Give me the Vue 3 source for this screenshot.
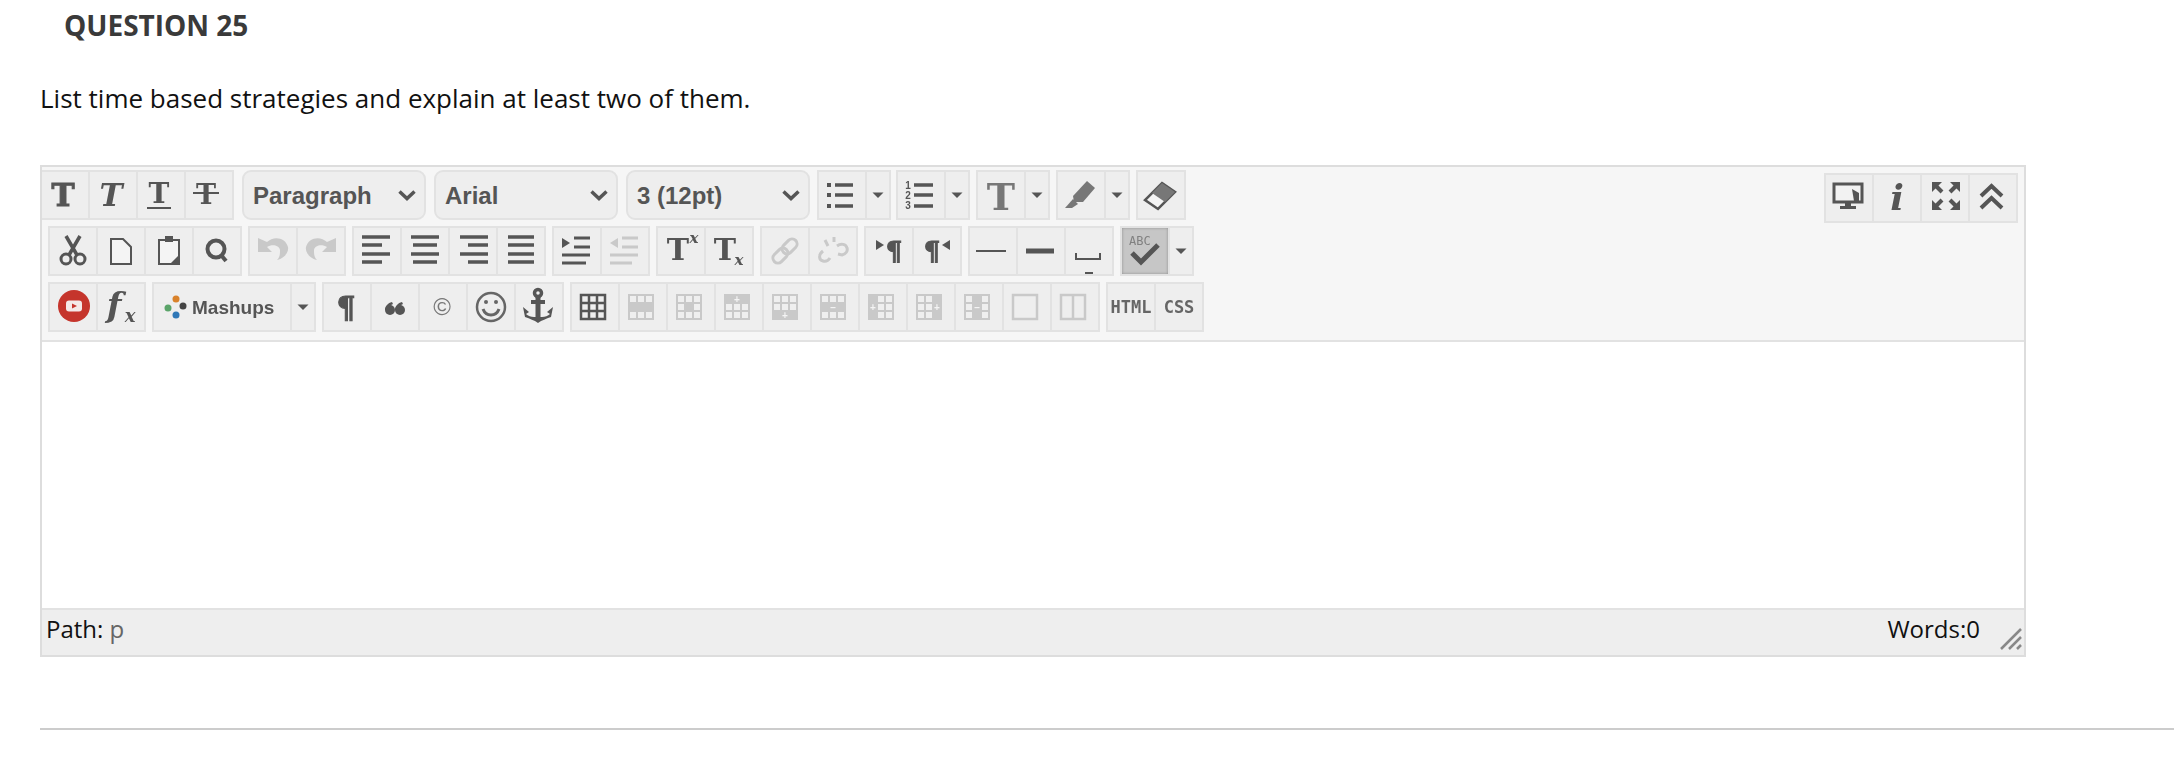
<script setup>
const D = '#555'
const G = '#c9c9c9'

const t = (x, y, size, str, fill = D, extra = '') =>
  `<text x="${x}" y="${y}" font-size="${size}" fill="${fill}" text-anchor="middle" font-family="DejaVu Serif" font-weight="bold" ${extra}>${str}</text>`

const heavy = `stroke="${D}" stroke-width="1"`

const lines = (rows, color = D, w = 3.5) =>
  rows.map(([a, b, y]) => `<path d="M${a} ${y}H${b}" stroke="${color}" stroke-width="${w}"/>`).join('')

const num = (y, n) =>
  `<text x="10" y="${y}" font-size="10" font-weight="bold" font-family="Liberation Sans" fill="${D}" text-anchor="middle">${n}</text>`

// table icons: 3x3 grid, solid cells are left out of the light squares
const grid = (solid, sign = '', sx = 0, sy = 0) => {
  let s = `<rect x="8" y="10" width="26" height="26" fill="${G}"/>`
  for (let r = 0; r < 3; r++) {
    for (let c = 0; c < 3; c++) {
      if (!solid.includes(r * 3 + c)) {
        s += `<rect x="${10 + c * 8}" y="${12 + r * 8}" width="6" height="6" fill="#efefef"/>`
      }
    }
  }
  if (sign) s += `<text x="${sx}" y="${sy}" font-size="10" font-family="Liberation Sans" font-weight="bold" fill="#f4f4f4" text-anchor="middle">${sign}</text>`
  return s
}

const undo = `<path d="M8 10v14h14l-5-5c5-3 12-2 13 3 0 4 0 7-3 10 8-2 12-8 11-13-2-9-14-12-21-5z" fill="${G}"/>`
const mark = `<circle cx="18" cy="26" r="5"/><path d="M13 26c0-4 3-7 7-8l1 2c-3 1-4 3-3 6z"/>`

const icons = {
  arrow: `<path d="M5.500 20.500h11l-5.500 5.500z" fill="${D}"/>`,
  bold: t(21, 34, 31, 'T', D, heavy),
  italic: t(21, 34, 31, 'T', D, 'font-style="italic"'),
  underline: t(21, 31, 28, 'T') + `<path d="M9 36H33" stroke="${D}" stroke-width="2"/>`,
  strike: t(20, 32, 27, 'T') + `<path d="M7 21H33" stroke="${D}" stroke-width="2"/>`,
  ul: `<g fill="${D}"><rect x="8" y="11" width="4" height="4"/><rect x="8" y="21" width="4" height="4"/><rect x="8" y="32" width="4" height="4"/></g>` +
    lines([[16, 34, 13], [16, 34, 23], [16, 34, 34]]),
  ol: num(17, 1) + num(27, 2) + num(37, 3) + lines([[16, 35, 13], [16, 35, 23], [16, 35, 34]]),
  color: t(23, 38, 38, 'T', '#777'),
  highlight: `<path d="M29 9l8 7-12 14-9 0-1-6z" fill="#777"/><path d="M15 27l5 5-6 4H7z" fill="#777"/>`,
  eraser: `<path d="M24 11l13 9-17 17-13-9z" fill="#f4f4f4" stroke="${D}" stroke-width="2.500"/><path d="M24 11l13 9-10 10-13-9z" fill="#777"/>`,
  slideshow: `<rect x="8" y="9" width="28" height="18" fill="#f2f2f2" stroke="${D}" stroke-width="3"/><path d="M26 14l7 4v8h-5z" fill="${D}"/><path d="M19 27h6v4h5v3H14v-3h5z" fill="${D}"/>`,
  info: t(23, 35, 36, 'i', D, 'font-style="italic"'),
  fullscreen: ['', 'matrix(-1 0 0 1 48 0)', 'matrix(1 0 0 -1 0 42)', 'matrix(-1 0 0 -1 48 42)']
    .map((m) => `<g transform="${m}"><path d="M10 7h10l-10 10z" fill="${D}"/><path d="M13 10l7 7" stroke="${D}" stroke-width="4"/></g>`).join(''),
  collapse: `<path d="M11 21L21.500 11 32 21M11 33L21.500 23 32 33" fill="none" stroke="${D}" stroke-width="4"/>`,
  cut: `<g fill="none" stroke="${D}"><circle cx="16" cy="31" r="5" stroke-width="3"/><circle cx="30" cy="31" r="5" stroke-width="3"/><path d="M19 27L30 8M27 27L16 8" stroke-width="3.500"/></g>`,
  copy: `<path d="M13 11h12l8 8v17H13z" fill="#f4f4f4" stroke="${D}" stroke-width="2"/>`,
  paste: `<rect x="13" y="12" width="20" height="24" fill="#f4f4f4" stroke="${D}" stroke-width="2"/><rect x="19" y="8" width="8" height="6" fill="${D}"/><path d="M33 27v9h-9z" fill="${D}"/>`,
  find: `<circle cx="22" cy="21" r="8.500" fill="none" stroke="${D}" stroke-width="4"/><path d="M27 27l5 6" stroke="${D}" stroke-width="4"/>`,
  undo,
  redo: `<g transform="matrix(-1 0 0 1 46 0)">${undo}</g>`,
  left: lines([[8, 36, 9], [8, 28, 17], [8, 36, 26], [8, 28, 34]]),
  center: lines([[9, 37, 9], [11, 35, 17], [9, 37, 26], [11, 35, 34]]),
  right: lines([[10, 38, 9], [18, 38, 17], [10, 38, 26], [18, 38, 34]]),
  justify: lines([[10, 36, 9], [10, 36, 17], [10, 36, 26], [10, 36, 34]]),
  indent: `<path d="M8 10l8 5-8 5z" fill="${D}"/>` + lines([[20, 36, 10], [20, 36, 19], [8, 36, 27], [8, 32, 35]], D, 3),
  outdent: `<path d="M16 10l-8 5 8 5z" fill="${G}"/>` + lines([[20, 36, 10], [20, 36, 19], [8, 36, 27], [8, 30, 35]], G, 3),
  sup: t(20, 32, 30, 'T') + t(36, 15, 15, 'x', D, 'font-style="italic"'),
  sub: t(19, 32, 30, 'T') + t(33, 37, 15, 'x', D, 'font-style="italic"'),
  link: `<g fill="none" stroke="${G}" stroke-width="3" transform="rotate(-45 23 23)"><rect x="8" y="18" width="17" height="10" rx="5"/><rect x="21" y="18" width="17" height="10" rx="5"/></g>`,
  unlink: `<path d="M13 23c-5 4-4 9 0 10 3 1 5 0 7-3M27 18c4-3 9-2 10 2 1 3-1 6-5 7l-4-1M15 12l3 6M24 9v5" fill="none" stroke="${G}" stroke-width="3"/>`,
  ltr: `<path d="M10 12l8 5-8 5z" fill="${D}"/>` + t(28, 32, 26, '¶', D, heavy),
  rtl: `<path d="M36 12l-8 5 8 5z" fill="${D}"/>` + t(18, 32, 26, '¶', D, heavy),
  hr: `<path d="M6 23H36" stroke="${D}" stroke-width="2"/>`,
  hrthick: `<path d="M8 23H36" stroke="${D}" stroke-width="5"/>`,
  nbsp: `<path d="M10 25v6H34v-6" fill="none" stroke="${D}" stroke-width="2"/><path d="M19 45h8" stroke="${D}" stroke-width="2"/>`,
  spell: `<text x="7" y="17" font-size="12" font-family="DejaVu Sans Mono" fill="#808080">ABC</text><path d="M10 25l9 9L36 17" fill="none" stroke="${D}" stroke-width="5"/>`,
  youtube: `<circle cx="24" cy="22" r="16" fill="#c5352c"/><rect x="16" y="16.500" width="16" height="11" rx="3" fill="#f4e9e8"/><path d="M22 19.500l5 2.500-5 2.500z" fill="#c5352c"/>`,
  fx: t(16, 33, 34, 'f', D, 'font-style="italic"') + t(32, 38, 18, 'x', D, 'font-style="italic"'),
  mashups: `<circle cx="22" cy="15" r="3.500" fill="#d9822b"/><circle cx="14" cy="24" r="3.500" fill="#5aa469"/><circle cx="29" cy="22" r="3.500" fill="#444"/><circle cx="22" cy="31" r="3.500" fill="#2f78b7"/>` +
    `<text x="38" y="30" font-size="19" font-weight="bold" font-family="Liberation Sans" fill="${D}">Mashups</text>`,
  para: t(22, 34, 30, '¶', D, heavy),
  quote: `<g fill="${D}">${mark}<g transform="translate(10 0)">${mark}</g></g>`,
  copyright: `<text x="22" y="31" font-size="24" font-family="Liberation Sans" fill="#777" text-anchor="middle">©</text>`,
  smiley: `<circle cx="23" cy="23" r="14" fill="none" stroke="#666" stroke-width="2.500"/><circle cx="18" cy="18" r="2" fill="#666"/><circle cx="28" cy="18" r="2" fill="#666"/><path d="M15 25c3 8 13 8 16 0" fill="none" stroke="#666" stroke-width="3"/>`,
  anchor: `<circle cx="22" cy="9" r="3.500" fill="none" stroke="${D}" stroke-width="3.500"/><path d="M22 13v22" stroke="${D}" stroke-width="5"/><path d="M15 18h14" stroke="${D}" stroke-width="4"/><path d="M7 23l2 10c5 2 9 3 13 6 4-3 8-4 13-6l2-10-6 5 3 2c-2 2-5 3-8 3h-8c-3 0-6-1-8-3l3-2z" fill="${D}"/>`,
  table: `<path d="M9 11h24v24H9zM17 11v24M25 11v24M9 19h24M9 27h24" fill="none" stroke="${D}" stroke-width="2.500"/>`,
  rowprops: grid([3, 4, 5]),
  cellprops: grid([4]),
  rowbefore: grid([0, 1, 2], '+', 21, 19),
  rowafter: grid([6, 7, 8], '+', 21, 35),
  rowdel: grid([3, 4, 5], '–', 21, 27),
  colbefore: grid([0, 3, 6], '+', 13, 27),
  colafter: grid([2, 5, 8], '+', 29, 27),
  coldel: grid([1, 4, 7], '–', 21, 27),
  merge: `<rect x="9" y="11" width="24" height="24" fill="none" stroke="${G}" stroke-width="2.500"/>`,
  split: `<path d="M9 11h24v24H9zM21 11v24" fill="none" stroke="${G}" stroke-width="2.500"/>`,
  html: `<text x="23" y="29" font-size="17" font-weight="bold" font-family="DejaVu Sans Mono" fill="#666" text-anchor="middle">HTML</text>`,
  css: `<text x="23" y="29" font-size="17" font-weight="bold" font-family="DejaVu Sans Mono" fill="#666" text-anchor="middle">CSS</text>`,
}

const cellWidth = (name) => (name === 'arrow' ? 22 : name === 'mashups' ? 136 : 46)

const row1 = [
  { items: ['ul', 'arrow'], tight: true },
  { items: ['ol', 'arrow'] },
  { items: ['color', 'arrow'] },
  { items: ['highlight', 'arrow'] },
  { items: ['eraser'] },
]
const row2 = [
  { items: ['cut', 'copy', 'paste', 'find'] },
  { items: ['undo', 'redo'] },
  { items: ['left', 'center', 'right', 'justify'] },
  { items: ['indent', 'outdent'] },
  { items: ['sup', 'sub'] },
  { items: ['link', 'unlink'] },
  { items: ['ltr', 'rtl'] },
  { items: ['hr', 'hrthick', 'nbsp'] },
  { items: ['spell', 'arrow'], active: 'spell' },
]
const row3 = [
  { items: ['youtube', 'fx'] },
  { items: ['mashups', 'arrow'] },
  { items: ['para', 'quote', 'copyright', 'smiley', 'anchor'] },
  { items: ['table', 'rowprops', 'cellprops', 'rowbefore', 'rowafter', 'rowdel', 'colbefore', 'colafter', 'coldel', 'merge', 'split'] },
  { items: ['html', 'css'] },
]
const selects = ['Paragraph', 'Arial', '3 (12pt)']
</script>

<template>
  <div class="page">
    <h2 class="title">QUESTION 25</h2>
    <p class="question">List time based strategies and explain at least two of them.</p>

    <div class="editor">
      <div class="toolbar">
        <div class="row first">
          <div class="group text-styles">
            <div v-for="name in ['bold', 'italic', 'underline', 'strike']" :key="name" class="cell">
              <svg width="46" height="46" viewBox="0 0 46 46" v-html="icons[name]"></svg>
            </div>
          </div>
          <div v-for="label in selects" :key="label" class="select">
            <span>{{ label }}</span>
            <svg width="18" height="11" viewBox="0 0 18 11"><path d="M1.500 1.500L9 8.500 16.500 1.500" fill="none" stroke="#555" stroke-width="3.500"/></svg>
          </div>
          <div v-for="(group, i) in row1" :key="i" class="group" :class="{ tight: group.tight }">
            <div v-for="name in group.items" :key="name" class="cell">
              <svg :width="cellWidth(name)" height="46" :viewBox="`0 0 ${cellWidth(name)} 46`" v-html="icons[name]"></svg>
            </div>
          </div>
          <div class="group right">
            <div v-for="name in ['slideshow', 'info', 'fullscreen', 'collapse']" :key="name" class="cell">
              <svg width="46" height="46" viewBox="0 0 46 46" v-html="icons[name]"></svg>
            </div>
          </div>
        </div>

        <div v-for="(row, r) in [row2, row3]" :key="r" class="row">
          <div v-for="(group, i) in row" :key="i" class="group">
            <div v-for="name in group.items" :key="name" class="cell" :class="{ active: group.active === name }">
              <svg :width="cellWidth(name)" height="46" :viewBox="`0 0 ${cellWidth(name)} 46`" v-html="icons[name]"></svg>
            </div>
          </div>
        </div>
      </div>

      <div class="area"></div>

      <div class="status">
        <span>Path: <span class="path">p</span></span>
        <span class="words">Words:0</span>
        <svg class="grip" width="22" height="22" viewBox="0 0 22 22">
          <path d="M1 21L21 1M9 21L21 9M17 21L21 17" stroke="#888" stroke-width="2.500"/>
        </svg>
      </div>
    </div>

    <div class="rule"></div>
  </div>
</template>

<style scoped>
.page {
  height: 762px;
  box-sizing: border-box;
  overflow: hidden;
  padding-left: 40px;
  background: #fff;
  font-family: "Open Sans", "Liberation Sans", sans-serif;
}

.title {
  margin: 0 0 0 24px;
  height: 47px;
  line-height: 50px;
  font-size: 28px;
  font-weight: 700;
  color: #3a3a3a;
}

.question {
  margin: 0;
  height: 118px;
  padding-top: 34px;
  box-sizing: border-box;
  line-height: 34px;
  font-size: 26px;
  color: #111;
}

.editor {
  width: 1986px;
  height: 492px;
  box-sizing: border-box;
  border: 2px solid #ddd;
  display: flex;
  flex-direction: column;
}

.toolbar {
  height: 175px;
  box-sizing: border-box;
  padding: 3px 6px 0 0;
  background: #f6f6f6;
  border-bottom: 2px solid #e2e2e2;
  display: flex;
  flex-direction: column;
  gap: 6px;
}

.row {
  display: flex;
  gap: 6px;
  height: 50px;
  margin-left: 6px;
}

.row.first {
  margin-left: 0;
}

.group {
  display: flex;
  border: 2px solid #e2e2e2;
  background: #eee;
  flex: none;
}

.group.tight {
  margin-left: -1px;
  margin-right: -1px;
}

.cell {
  display: flex;
  height: 46px;
}

.cell + .cell {
  border-left: 2px solid #e2e2e2;
}

.cell svg {
  display: block;
  filter: blur(0.4px);
}

.cell.active {
  background: #c6c6c6;
  box-shadow: inset 0 0 3px #8e8e8e;
}

.text-styles {
  border-left: 0;
  margin-right: 2px;
}

.select {
  width: 184px;
  height: 50px;
  box-sizing: border-box;
  flex: none;
  margin-right: 2px;
  padding: 2px 8px 0 9px;
  display: flex;
  align-items: center;
  justify-content: space-between;
  border: 2px solid #e2e2e2;
  border-radius: 9px;
  background: #eee;
  font-family: "Liberation Sans", Arial, sans-serif;
  font-size: 24px;
  font-weight: 700;
  color: #555;
}

.select svg {
  margin-top: -2px;
}

.right {
  margin-left: auto;
  margin-top: 3px;
  height: 46px;
}

.area {
  flex: 1;
  background: #fff;
}

.status {
  position: relative;
  height: 47px;
  box-sizing: border-box;
  border-top: 2px solid #e2e2e2;
  background: #eee;
  padding: 0 0 8px 4px;
  display: flex;
  align-items: center;
  font-size: 24px;
  color: #111;
}

.path {
  color: #666;
}

.words {
  margin-left: auto;
  margin-right: 44px;
}

.grip {
  position: absolute;
  right: 2px;
  bottom: 5px;
}

.rule {
  height: 2px;
  margin-top: 71px;
  background: #ccc;
}
</style>

<style>
body {
  background: #fff;
}
</style>
